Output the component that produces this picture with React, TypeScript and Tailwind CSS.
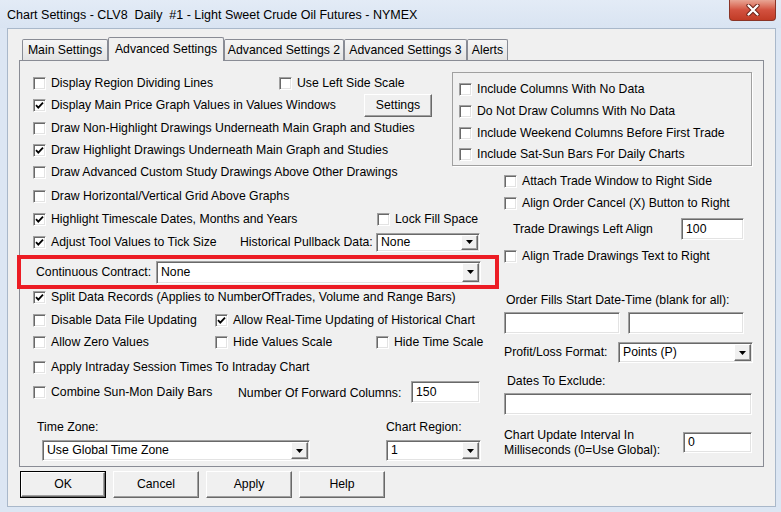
import React from 'react'

const sunken =
  'bg-white border border-t-[#a0a0a0] border-l-[#a0a0a0] border-r-white border-b-white shadow-[inset_1px_1px_0_#696969,inset_-1px_-1px_0_#e3e3e3]'
const raised =
  'bg-[#f0f0f0] border border-t-white border-l-white border-r-[#696969] border-b-[#696969] shadow-[inset_-1px_-1px_0_#a0a0a0]'

function Box({ checked }: { checked?: boolean }) {
  return (
    <span className={`${sunken} w-[13px] h-[13px] shrink-0 flex items-center justify-center`}>
      {checked && (
        <svg width="9" height="9" viewBox="0 0 9 9">
          <path d="M1 4.2l2.3 2.4L8 1.6" stroke="#000" strokeWidth="1.8" fill="none" />
        </svg>
      )}
    </span>
  )
}

function Check({ label, checked, className = '' }: { label: string; checked?: boolean; className?: string }) {
  return (
    <div className={`flex items-center shrink-0 ${className}`}>
      <Box checked={checked} />
      <span className="ml-[5px] whitespace-nowrap">{label}</span>
    </div>
  )
}

function Combo({ value, className }: { value: string; className: string }) {
  return (
    <div className={`${sunken} flex items-stretch p-[1px] shrink-0 ${className}`}>
      <span className="flex-1 pl-[3px] flex items-center whitespace-nowrap">{value}</span>
      <span className={`${raised} w-[17px] flex items-center justify-center`}>
        <svg width="7" height="4" viewBox="0 0 7 4">
          <path d="M0 0h7L3.5 4z" fill="#000" />
        </svg>
      </span>
    </div>
  )
}

function Field({ value = '', className }: { value?: string; className: string }) {
  return <div className={`${sunken} flex items-center pl-[4px] shrink-0 ${className}`}>{value}</div>
}

function Tab({ label, active, className }: { label: string; active?: boolean; className: string }) {
  return active ? (
    <div
      className={`relative z-10 -mb-px h-[24px] bg-[#f0f0f0] border border-b-0 border-[#898c95] rounded-t-[2px] flex items-center justify-center text-[12.25px] ${className}`}
    >
      {label}
    </div>
  ) : (
    <div
      className={`h-[21px] bg-gradient-to-b from-[#f6f6f6] to-[#e3e3e3] border border-b-0 border-[#898c95] rounded-t-[2px] flex items-center justify-center text-[12.25px] ${className}`}
    >
      {label}
    </div>
  )
}

function Btn({ label, def }: { label: string; def?: boolean }) {
  return def ? (
    <div className="w-[86px] h-[27px] border border-black flex">
      <div className={`${raised} flex-1 flex items-center justify-center`}>{label}</div>
    </div>
  ) : (
    <div className={`${raised} w-[86px] h-[27px] flex items-center justify-center`}>{label}</div>
  )
}

export default function App() {
  return (
    <div className="w-[781px] h-[512px] bg-[#dce6f3] flex flex-col font-['Liberation_Sans',Arial,sans-serif] text-[12.25px] leading-[15px] text-black overflow-hidden">
      {/* title bar */}
      <div className="h-[28px] flex items-start shrink-0 bg-gradient-to-b from-[#e3ebf6] to-[#d9e4f2]">
        <span className="pl-[7px] pt-[8px] text-[12.5px] whitespace-pre text-[#000]">
          Chart Settings - CLV8  Daily  #1 - Light Sweet Crude Oil Futures - NYMEX
        </span>
        <div className="ml-auto mr-[5px] w-[47px] h-[21px] rounded-b-[4px] border border-t-0 border-[#8a3426] bg-gradient-to-b from-[#e8a595] via-[#d2513f] to-[#c13b25] flex items-center justify-center">
          <svg width="14" height="12" viewBox="0 0 14 12">
            <path d="M2.5 1.5l9 9M11.5 1.5l-9 9" stroke="#6b2218" strokeWidth="4.2" strokeLinecap="round" />
            <path d="M2.5 1.5l9 9M11.5 1.5l-9 9" stroke="#fff" strokeWidth="2.3" strokeLinecap="round" />
          </svg>
        </div>
      </div>

      {/* client area */}
      <div className="ml-[7px] mr-[5px] h-[479px] border border-[#a9b8ca] bg-[#f0f0f0] flex flex-col shrink-0">
        {/* tabs */}
        <div className="flex items-end pt-[8px] ml-[11px]">
          <Tab label="Main Settings" className="ml-[3px] w-[86px]" />
          <Tab label="Advanced Settings" active className="w-[116px]" />
          <Tab label="Advanced Settings 2" className="w-[120px]" />
          <Tab label="Advanced Settings 3" className="w-[123px]" />
          <Tab label="Alerts" className="w-[41px]" />
        </div>

        {/* panel */}
        <div className="ml-[11px] w-[745px] h-[407px] border border-[#898c95] bg-[#f0f0f0] flex">
          {/* left column */}
          <div className="w-[432px] shrink-0 flex flex-col pt-[11px]">
            <div className="h-[22px] flex items-center pl-[13px]">
              <Check label="Display Region Dividing Lines" className="w-[246px]" />
              <Check label="Use Left Side Scale" />
            </div>
            <div className="h-[22px] flex items-center pl-[13px]">
              <Check label="Display Main Price Graph Values in Values Windows" checked className="w-[331px]" />
              <div className={`${raised} w-[68px] h-[23px] flex items-center justify-center shrink-0`}>Settings</div>
            </div>
            <div className="h-[22px] mt-[1px] flex items-center pl-[13px]">
              <Check label="Draw Non-Highlight Drawings Underneath Main Graph and Studies" />
            </div>
            <div className="h-[22px] flex items-center pl-[13px]">
              <Check label="Draw Highlight Drawings Underneath Main Graph and Studies" checked />
            </div>
            <div className="h-[22px] flex items-center pl-[13px]">
              <Check label="Draw Advanced Custom Study Drawings Above Other Drawings" />
            </div>
            <div className="h-[22px] mt-[2px] flex items-center pl-[13px]">
              <Check label="Draw Horizontal/Vertical Grid Above Graphs" />
            </div>
            <div className="h-[22px] mt-[1px] flex items-center pl-[13px]">
              <Check label="Highlight Timescale Dates, Months and Years" checked className="w-[344px]" />
              <Check label="Lock Fill Space" />
            </div>
            <div className="h-[22px] mt-[1px] flex items-center pl-[13px]">
              <Check label="Adjust Tool Values to Tick Size" checked className="w-[207px]" />
              <span className="w-[136px] shrink-0 whitespace-nowrap">Historical Pullback Data:</span>
              <Combo value="None" className="w-[104px] h-[19px]" />
            </div>

            {/* continuous contract, highlighted */}
            <div className="relative mt-[2px] w-[479px] h-[34px] flex items-center pl-[16px] shrink-0">
              <span className="w-[120px] shrink-0 whitespace-nowrap">Continuous Contract:</span>
              <Combo value="None" className="w-[325px] h-[23px]" />
              <div className="absolute top-0 bottom-0 -left-[3px] right-0 border-[4px] border-[#ec1c24] pointer-events-none" />
            </div>

            <div className="h-[16px] flex items-center pl-[13px]">
              <Check label="Split Data Records (Applies to NumberOfTrades, Volume and Range Bars)" checked />
            </div>
            <div className="h-[22px] mt-[4px] flex items-center pl-[13px]">
              <Check label="Disable Data File Updating" className="w-[182px]" />
              <Check label="Allow Real-Time Updating of Historical Chart" checked />
            </div>
            <div className="h-[22px] flex items-center pl-[13px]">
              <Check label="Allow Zero Values" className="w-[182px]" />
              <Check label="Hide Values Scale" className="w-[161px]" />
              <Check label="Hide Time Scale" />
            </div>
            <div className="h-[22px] mt-[3px] flex items-center pl-[13px]">
              <Check label="Apply Intraday Session Times To Intraday Chart" />
            </div>
            <div className="h-[22px] mt-[3px] flex items-center pl-[13px]">
              <Check label="Combine Sun-Mon Daily Bars" className="w-[205px]" />
              <span className="w-[173px] shrink-0 whitespace-nowrap pt-[3px]">Number Of Forward Columns:</span>
              <Field value="150" className="w-[69px] h-[22px]" />
            </div>

            <div className="flex mt-[17px]">
              <div className="w-[366px] shrink-0 pl-[17px] flex flex-col">
                <span className="h-[14px] leading-[14px]">Time Zone:</span>
                <Combo value="Use Global Time Zone" className="ml-[5px] mt-[6px] w-[268px] h-[21px]" />
              </div>
              <div className="flex flex-col">
                <span className="h-[14px] leading-[14px]">Chart Region:</span>
                <Combo value="1" className="mt-[6px] w-[95px] h-[21px]" />
              </div>
            </div>
          </div>

          {/* right column */}
          <div className="flex-1 flex flex-col pt-[11px]">
            <div className="w-[300px] h-[94px] border border-[#a0a0a0] shadow-[1px_1px_0_#fff] pt-[5px] pl-[6px] flex flex-col shrink-0">
              <div className="h-[22px] flex items-center">
                <Check label="Include Columns With No Data" />
              </div>
              <div className="h-[22px] flex items-center">
                <Check label="Do Not Draw Columns With No Data" />
              </div>
              <div className="h-[22px] flex items-center">
                <Check label="Include Weekend Columns Before First Trade" />
              </div>
              <div className="h-[21px] flex items-center">
                <Check label="Include Sat-Sun Bars For Daily Charts" />
              </div>
            </div>

            <div className="pl-[52px] flex flex-col">
              <div className="h-[22px] mt-[4px] flex items-center">
                <Check label="Attach Trade Window to Right Side" />
              </div>
              <div className="h-[22px] flex items-center">
                <Check label="Align Order Cancel (X) Button to Right" />
              </div>
              <div className="h-[22px] mt-[4px] flex items-center">
                <span className="w-[177px] pl-[9px] shrink-0 whitespace-nowrap">Trade Drawings Left Align</span>
                <Field value="100" className="w-[63px] h-[22px]" />
              </div>
              <div className="h-[22px] mt-[5px] flex items-center">
                <Check label="Align Trade Drawings Text to Right" />
              </div>
              <span className="h-[14px] leading-[14px] mt-[26px] pl-[2px] whitespace-nowrap">
                Order Fills Start Date-Time (blank for all):
              </span>
              <div className="flex gap-[8px] mt-[5px]">
                <Field className="w-[116px] h-[22px]" />
                <Field className="w-[116px] h-[22px]" />
              </div>
              <div className="h-[21px] mt-[8px] flex items-center">
                <span className="w-[114px] shrink-0 whitespace-nowrap">Profit/Loss Format:</span>
                <Combo value="Points (P)" className="w-[135px] h-[21px]" />
              </div>
              <span className="h-[14px] leading-[14px] mt-[11px] pl-[3px] whitespace-nowrap">Dates To Exclude:</span>
              <Field className="mt-[5px] w-[248px] h-[22px]" />
              <div className="flex mt-[13px]">
                <span className="w-[179px] shrink-0 leading-[15px]">
                  Chart Update Interval In
                  <br />
                  Milliseconds (0=Use Global):
                </span>
                <Field value="0" className="mt-[4px] w-[69px] h-[21px]" />
              </div>
            </div>
          </div>
        </div>

        {/* buttons */}
        <div className="flex gap-[7px] ml-[12px] mt-[4px]">
          <Btn label="OK" def />
          <Btn label="Cancel" />
          <Btn label="Apply" />
          <Btn label="Help" />
        </div>
      </div>
    </div>
  )
}
